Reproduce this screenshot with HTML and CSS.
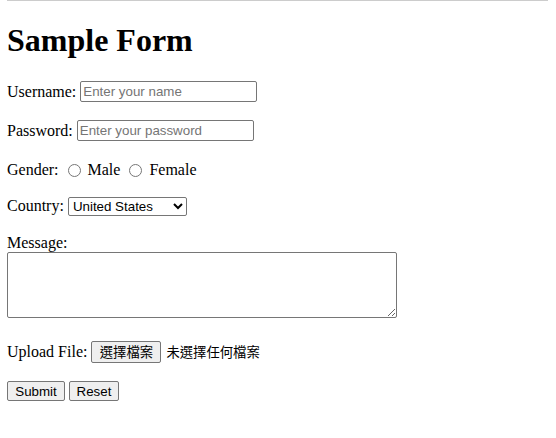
FILE: index.html
```html
<!DOCTYPE html>
<html lang="zh-Hant">
<head>
<meta charset="utf-8">
<title>Sample Form</title>
<link rel="stylesheet" href="styles.css">
</head>
<body class="page">
<h1 class="title">Sample Form</h1>
<form class="form">
  <div class="row row-input"><label class="lbl" for="u">Username:</label><input class="field field-text" id="u" type="text" placeholder="Enter your name"></div>
  <div class="row row-input"><label class="lbl" for="pw">Password:</label><input class="field field-text" id="pw" type="password" placeholder="Enter your password"></div>
  <div class="row row-radio"><span class="lbl">Gender:</span><input class="radio" type="radio" name="g" id="gm"><label class="lbl" for="gm">Male</label><input class="radio" type="radio" name="g" id="gf"><label class="lbl" for="gf">Female</label></div>
  <div class="row row-select"><label class="lbl" for="c">Country:</label><select class="field select" id="c"><option>United States</option><option>Canada</option><option>United Kingdom</option></select></div>
  <div class="row-message"><label class="lbl lbl-block" for="m">Message:</label><textarea class="field area" id="m"></textarea></div>
  <div class="row row-file"><span class="lbl">Upload File:</span><span class="file"><button type="button" class="btn file-btn">選擇檔案</button><span class="file-name">未選擇任何檔案</span></span></div>
  <div class="row row-buttons"><button type="submit" class="btn btn-submit">Submit</button><button type="reset" class="btn btn-reset">Reset</button></div>
</form>
</body>
</html>
```
FILE: styles.css
```css
html { background: #fff; }
.page {
  margin: 0 8px 8px 7px;
  border-top: 1px solid #cccccc;
  font-family: "Liberation Serif", "Times New Roman", serif;
  font-size: 16px;
  line-height: 18px;
  color: #000;
}
.title {
  font-size: 32px;
  line-height: 37px;
  font-weight: bold;
  margin: 21px 0 21px;
}
.form { margin: 0; }
.row {
  display: flex;
  align-items: center;
  gap: 4px;
  margin: 0 0 16px;
}
.row-input { height: 23px; }
.row-radio {
  height: 22px;
  gap: 0;
  box-sizing: border-box;
  padding-bottom: 1px;
  align-items: flex-end;
}
.row-select { height: 20px; }
.row-file { height: 27px; }
.row-buttons { height: 20px; }
.lbl { white-space: nowrap; }
.field {
  font-family: "Liberation Sans", Arial, sans-serif;
  font-size: 13.33px;
  box-sizing: border-box;
  margin: 0;
}
.field-text {
  width: 177px;
  height: 21px;
  padding: 1px 2px;
  border: 1px solid #767676;
  border-radius: 2px;
}
.field-text::placeholder { color: #757575; }
.select {
  width: 119px;
  height: 19px;
  border: 1px solid #767676;
  border-radius: 2px;
  background: #fff;
  color: #000;
}
.row-message {
  margin: 0 0 16px;
  padding-top: 2px;
  padding-bottom: 4px;
}
.lbl-block {
  display: block;
  margin-bottom: 0;
}
.area {
  display: block;
  width: 390px;
  height: 66px;
  border: 1px solid #767676;
  border-radius: 2px;
  font-family: "Liberation Mono", monospace;
}
.radio {
  width: 13px;
  height: 13px;
  margin: 0 7px 2px 9px;
}
.btn {
  font-family: "Liberation Sans", Arial, sans-serif;
  font-size: 13.33px;
  background: #efefef;
  border: 1px solid #767676;
  border-radius: 2px;
  color: #000;
  padding: 0;
  margin: 0;
  box-sizing: border-box;
}
.file {
  display: flex;
  align-items: center;
  gap: 5px;
  font-size: 13.33px;
}
.file-btn {
  font-family: "Noto Sans CJK TC", sans-serif;
  width: 70px;
  height: 22px;
}
.file-name { font-family: "Noto Sans CJK TC", sans-serif; line-height: 18px; }
.btn-submit { width: 58px; height: 20px; }
.btn-reset { width: 50px; height: 20px; }
```
